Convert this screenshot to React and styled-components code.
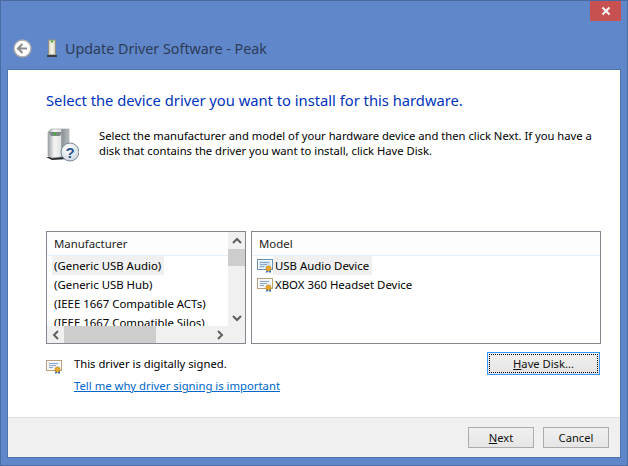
import React from "react";
import styled, { createGlobalStyle } from "styled-components";

const Global = createGlobalStyle`
  html, body { margin: 0; padding: 0; background: #5f87c9; }
  * { box-sizing: border-box; }
`;
const Frame = styled.div`
  width: 628px; height: 466px; background: #5f87c9; border: 1px solid #4a6da6; border-top-color: #49699f;
  padding: 0 6px 7px; display: flex; flex-direction: column;
  font-family: "Noto Sans", "Open Sans", sans-serif; font-size: 11.4px; color: #000; overflow: hidden;
`;
const Caption = styled.div`display: flex; justify-content: flex-end; height: 20px; flex: none;`;
const CloseButton = styled.div`
  width: 31px; height: 20px; background: #c75050; display: flex; align-items: center; justify-content: center;
`;
const TitleRow = styled.div`
  height: 48px; flex: none; display: flex; align-items: flex-start; padding: 18px 0 0 6px;
`;
const BackButton = styled.div`width: 19px; height: 19px; margin-right: 15px; flex: none;`;
const TitleIcon = styled.div`width: 10px; height: 19px; margin-right: 8px; flex: none;`;
const Title = styled.div`
  font-size: 14.3px; line-height: 20px; color: #2d3c58;
`;
const Client = styled.div`
  flex: 1; min-height: 0; background: #fff; border: 1px solid #4f73ad; display: flex; flex-direction: column;
`;
const Body = styled.div`flex: 1; min-height: 0; padding: 19px 19px 0 38px; display: flex; flex-direction: column;`;
const Heading = styled.div`
  font-size: 14.73px; line-height: 22px; color: #0033bc;
`;
const Intro = styled.div`display: flex; margin-top: 17px; height: 103px; flex: none;`;
const IntroIcon = styled.div`width: 33px; height: 34px; margin-right: 20px; flex: none;`;
const IntroText = styled.div`font-size: 11.22px; line-height: 15px; width: 510px;`;
const Lists = styled.div`display: flex; gap: 5px; height: 113px; flex: none;`;
const ListBox = styled.div`
  width: ${p => p.$w}px; flex: none; border: 1px solid #828790; background: #fff; position: relative; overflow: hidden;
  display: grid; grid-template-columns: 1fr ${p => (p.$scroll ? "17px" : "0")}; grid-template-rows: 1fr ${p => (p.$scroll ? "17px" : "0")};
`;
const ListMain = styled.div`min-width: 0; min-height: 0; overflow: hidden; display: flex; flex-direction: column;`;
const ListHeader = styled.div`
  height: 24px; flex: none; border-bottom: 1px solid #e5f0fb; background: #fdfdfe; padding-left: 7px; line-height: 23px; color: #1c1c1c;
`;
const Rows = styled.div`padding-left: 5px; flex: 1; overflow: hidden;`;
const Row = styled.div`
  height: 19px; line-height: 19px; display: flex; align-items: center; white-space: nowrap;
`;
const RowLabel = styled.span`
  height: 19px; padding: 0 3px 0 2px; background: ${p => (p.$sel ? "#f0f0f0" : "transparent")};
`;
const RowIcon = styled.div`width: 16px; height: 16px; flex: none; margin-right: 0;`;
const VBar = styled.div`
  background: #f0f0f0; display: flex; flex-direction: column; align-items: stretch; border-left: 0;
`;
const HBar = styled.div`background: #f0f0f0; display: flex; align-items: stretch;`;
const Corner = styled.div`background: #f0f0f0;`;
const ArrowBox = styled.div`
  width: ${p => (p.$h ? "17px" : "auto")}; height: ${p => (p.$h ? "auto" : "17px")}; flex: none; display: flex; align-items: center; justify-content: center;
`;
const VThumb = styled.div`height: 17px; background: #cdcdcd; flex: none;`;
const HThumb = styled.div`width: 92px; background: #cdcdcd; flex: none;`;
const Spacer = styled.div`flex: 1;`;
const Bottom = styled.div`display: flex; justify-content: space-between; margin-top: 8px;`;
const SignBlock = styled.div`display: grid; grid-template-columns: 16px 1fr; column-gap: 12px; padding-top: 4px;`;
const CertSlot = styled.div`padding-top: 3px; width: 16px; height: 16px;`;
const SignText = styled.div`font-size: 11.25px; line-height: 16px;`;
const Help = styled.a`
  grid-column: 2; color: #0066cc; text-decoration: underline; font-size: 11.3px; line-height: 16px; margin-top: 6px;
`;
const Button = styled.div`
  width: ${p => p.$w}px; height: ${p => p.$hh}px; flex: none; display: flex; align-items: center; justify-content: center;
  border: 1px solid ${p => (p.$focus ? "#3399ff" : "#acacac")}; background: linear-gradient(#f0f0f0, #e5e5e5);
  color: #111; position: relative; font-size: 11.2px;
  u { text-decoration: underline; }
`;
const FocusRing = styled.div`
  position: absolute; inset: 1px; border: 1px dotted #000;
`;
const DiskButton = styled(Button)`margin-right: 1px;`;
const Footer = styled.div`
  height: 40px; flex: none; border-top: 1px solid #dfdfdf; background: #f0f0f0; display: flex; justify-content: flex-end;
  align-items: flex-start; gap: 9px; padding: 9px 11px 0 0;
`;

const Cert = ({ tone = "#b8a07c", fill = "#eef1f5" }) => (
  <svg width="16" height="16" viewBox="0 0 16 16">
    <rect x="0.5" y="1.5" width="15" height="10" fill={fill} stroke={tone} />
    <rect x="1.5" y="2.5" width="13" height="8" fill="none" stroke="#fff" />
    <path d="M3 4.5h9M3 6.5h7M3 8.5h4" stroke="#8fa8c8" />
    <path d="M9.5 11l-.5 4 1.5-1 .5 1 .5-4z" fill="#2f6fd0" />
    <path d="M12 11v4l1-1 1 1v-4z" fill="#2f6fd0" />
    <circle cx="11.5" cy="10.5" r="2.6" fill="#e8a928" stroke="#b87f10" strokeWidth=".6" />
  </svg>
);

const Chevron = ({ d }) => {
  const paths = {
    up: "M1 6 L5 2 L9 6",
    down: "M1 2 L5 6 L9 2",
    left: "M6 1 L2 5 L6 9",
    right: "M2 1 L6 5 L2 9",
  };
  const h = d === "up" || d === "down";
  return (
    <svg width={h ? 10 : 8} height={h ? 8 : 10} viewBox={h ? "0 0 10 8" : "0 0 8 10"}>
      <path d={paths[d]} fill="none" stroke="#606060" strokeWidth="2" />
    </svg>
  );
};

const App = () => (
  <>
    <Global />
    <Frame>
      <Caption>
        <CloseButton>
          <svg width="10" height="10" viewBox="0 0 10 10">
            <path d="M1.5 1.5l7 7M8.5 1.5l-7 7" stroke="#fff" strokeWidth="2" />
          </svg>
        </CloseButton>
      </Caption>
      <TitleRow>
        <BackButton>
          <svg width="19" height="19" viewBox="0 0 19 19">
            <circle cx="9.5" cy="9.5" r="8.5" fill="#fff" stroke="#a9a9a9" strokeWidth="1.4" />
            <path d="M9.5 5L5 9.5l4.5 4.5M5.5 9.5H14" fill="none" stroke="#8a8a8a" strokeWidth="2" />
          </svg>
        </BackButton>
        <TitleIcon>
          <svg width="10" height="19" viewBox="0 0 10 19">
            <rect x="1.5" y="1" width="7" height="15" fill="#d9d6c8" stroke="#8f8f84" />
            <rect x="3.5" y="3" width="3" height="12" fill="#f4f2e6" />
            <rect x="4" y="1.5" width="2" height="2" fill="#43b02a" />
            <rect x="0" y="16" width="10" height="2" fill="#3a3f46" />
          </svg>
        </TitleIcon>
        <Title>Update Driver Software - Peak</Title>
      </TitleRow>
      <Client>
        <Body>
          <Heading>Select the device driver you want to install for this hardware.</Heading>
          <Intro>
            <IntroIcon>
              <svg width="33" height="34" viewBox="0 0 33 34">
                <defs>
                  <linearGradient id="tower" x1="0" x2="1" y1="0" y2="0">
                    <stop offset="0" stopColor="#9aa0a4" />
                    <stop offset=".3" stopColor="#f4f6f4" />
                    <stop offset=".62" stopColor="#dfe3e2" />
                    <stop offset=".65" stopColor="#8b9195" />
                    <stop offset="1" stopColor="#b7bcbe" />
                  </linearGradient>
                  <radialGradient id="help" cx=".4" cy=".3" r=".8">
                    <stop offset="0" stopColor="#ffffff" />
                    <stop offset="1" stopColor="#c9d3dc" />
                  </radialGradient>
                </defs>
                <path d="M0 29l6 3 16-1 0-2-16 0z" fill="#23272b" />
                <path d="M2 4l3-3h18v27l-17 2-4-2z" fill="url(#tower)" stroke="#a4a9ad" strokeWidth=".7" />
                <path d="M3 4h13l-2 4H5z" fill="#7f878c" />
                <path d="M7 5h4l-2 3z" fill="#3fb52a" />
                <circle cx="24" cy="24" r="9" fill="url(#help)" stroke="#7a8794" />
                <text x="24" y="29.5" textAnchor="middle" fontFamily="Liberation Sans, sans-serif" fontWeight="700" fontSize="15" fill="#2b4f93">?</text>
              </svg>
            </IntroIcon>
            <IntroText>
              Select the manufacturer and model of your hardware device and then click Next. If you have a<br />
              disk that contains the driver you want to install, click Have Disk.
            </IntroText>
          </Intro>
          <Lists>
            <ListBox $w={200} $scroll>
              <ListMain>
                <ListHeader>Manufacturer</ListHeader>
                <Rows>
                  <Row><RowLabel $sel>(Generic USB Audio)</RowLabel></Row>
                  <Row><RowLabel>(Generic USB Hub)</RowLabel></Row>
                  <Row><RowLabel>(IEEE 1667 Compatible ACTs)</RowLabel></Row>
                  <Row><RowLabel>(IEEE 1667 Compatible Silos)</RowLabel></Row>
                </Rows>
              </ListMain>
              <VBar>
                <ArrowBox><Chevron d="up" /></ArrowBox>
                <VThumb />
                <Spacer />
                <ArrowBox><Chevron d="down" /></ArrowBox>
              </VBar>
              <HBar>
                <ArrowBox $h><Chevron d="left" /></ArrowBox>
                <HThumb />
                <Spacer />
                <ArrowBox $h><Chevron d="right" /></ArrowBox>
              </HBar>
              <Corner />
            </ListBox>
            <ListBox $w={350}>
              <ListMain>
                <ListHeader>Model</ListHeader>
                <Rows>
                  <Row><RowIcon><Cert tone="#6b8fb0" fill="#d5e6f5" /></RowIcon><RowLabel $sel>USB Audio Device</RowLabel></Row>
                  <Row><RowIcon><Cert /></RowIcon><RowLabel>XBOX 360 Headset Device</RowLabel></Row>
                </Rows>
              </ListMain>
            </ListBox>
          </Lists>
          <Bottom>
            <SignBlock>
              <CertSlot><Cert /></CertSlot>
              <SignText>This driver is digitally signed.</SignText>
              <Help href="#">Tell me why driver signing is important</Help>
            </SignBlock>
            <DiskButton $w={113} $hh={23} $focus>
              <FocusRing />
              <span><u>H</u>ave Disk...</span>
            </DiskButton>
          </Bottom>
        </Body>
        <Footer>
          <Button $w={66} $hh={21}><span><u>N</u>ext</span></Button>
          <Button $w={66} $hh={21}><span>Cancel</span></Button>
        </Footer>
      </Client>
    </Frame>
  </>
);

export default App;
